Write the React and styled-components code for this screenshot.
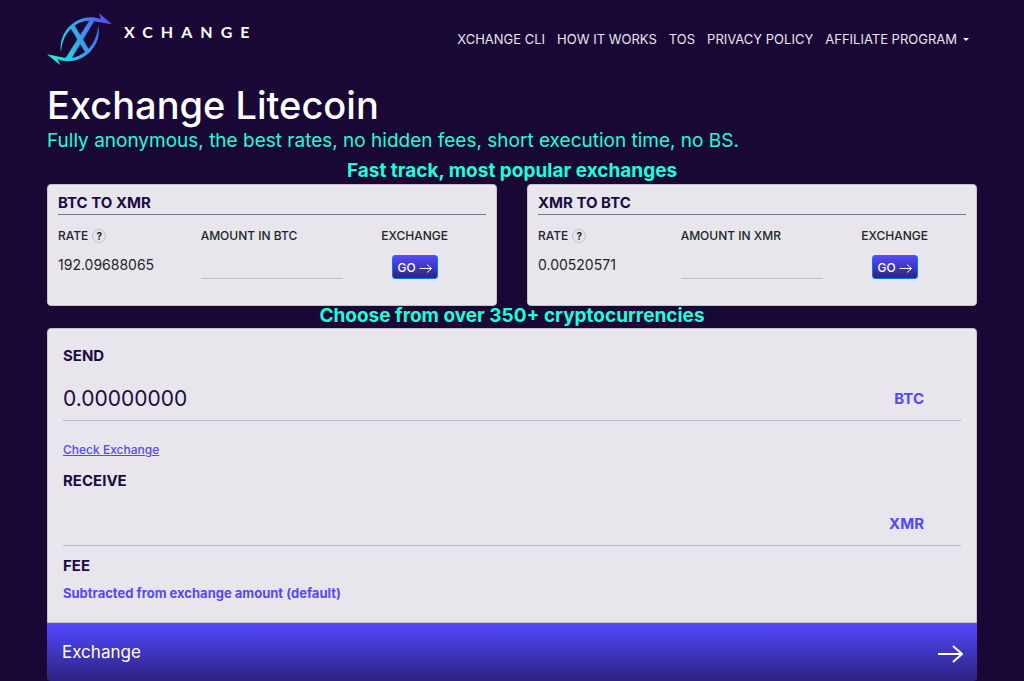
import React from 'react'
import styled, { createGlobalStyle } from 'styled-components'

const GlobalStyle = createGlobalStyle`
  * {
    box-sizing: border-box;
  }

  body {
    margin: 0;
    background: #190836;
    color: #212529;
    font-family: 'Inter', sans-serif;
    font-size: 12px;
    line-height: 20px;
  }

  button, input, select {
    font-family: inherit;
  }
`

const Container = styled.div`
  max-width: 960px;
  margin: 0 auto;
  padding: 0 15px;
`

const Header = styled.header`
  display: flex;
  align-items: flex-start;
  justify-content: space-between;
  height: 83px;
  padding: 12px 0;
`

const Brand = styled.a`
  display: flex;
  gap: 12px;
  color: #fff;
  text-decoration: none;
`

const BrandName = styled.span`
  margin-top: 10px;
  font-family: 'Lato', sans-serif;
  font-size: 16px;
  font-weight: 700;
  letter-spacing: 8px;
`

const Nav = styled.nav`
  display: flex;
  gap: 12px;
  padding: 17px 8px 0 0;
`

const NavLink = styled.a`
  display: flex;
  align-items: center;
  color: #e8e6ec;
  font-size: 13px;
  text-decoration: none;
`

const Caret = styled.span`
  margin-left: 6px;
  border-top: 3px solid #fff;
  border-right: 3px solid transparent;
  border-left: 3px solid transparent;
`

const Title = styled.h1`
  margin: 0;
  color: #fff;
  font-size: 38px;
  font-weight: 500;
  line-height: 44px;
`

const Subtitle = styled.p`
  margin: 0 0 6px;
  color: #1fffd7;
  font-size: 19px;
  line-height: 28px;
`

const SectionTitle = styled.h2`
  margin: 0;
  padding-bottom: 2px;
  color: #1fffd7;
  font-size: 19px;
  font-weight: 700;
  line-height: 20px;
  text-align: center;
`

const FastTrack = styled.div`
  display: grid;
  grid-template-columns: repeat(2, 1fr);
  gap: 30px;
  margin-top: 1px;

  @media only screen and (max-width: 768px) {
    grid-template-columns: 1fr;
  }
`

const Card = styled.form`
  padding: 8px 10px 26px;
  background: #e8e6ec;
  border: 1px solid #c6c3cb;
  border-radius: 4px;
`

const CardTitle = styled.h3`
  margin: 0 0 11px;
  padding-bottom: 2px;
  border-bottom: 1px solid #7d739b;
  color: #1c0a45;
  font-size: 15px;
  font-weight: 700;
  line-height: 19px;
`

const CardGrid = styled.div`
  display: grid;
  grid-template-columns: repeat(3, 1fr);
  row-gap: 2px;
`

const Label = styled.label`
  display: flex;
  align-items: center;
  justify-content: ${(props) => (props.$center ? 'center' : 'flex-start')};
  gap: 4px;
  font-weight: 500;
`

const Help = styled.button`
  width: 14px;
  height: 14px;
  padding: 0;
  background: none;
  border: 1px solid #c3bdd8;
  border-radius: 50%;
  color: #212529;
  font-size: 10px;
  font-weight: 700;
  line-height: 12px;
`

const Rate = styled.output`
  height: 31px;
  font-size: 14px;
  line-height: 34px;
`

const AmountInput = styled.input`
  width: 100%;
  height: 31px;
  padding: 0;
  background: none;
  border: 0;
  border-bottom: 1px solid #c0bbd8;
  border-radius: 0;
  font-size: 14px;
  outline: none;
`

const GoButton = styled.button`
  display: flex;
  align-items: center;
  place-self: end center;
  gap: 3px;
  height: 24px;
  padding: 0 5px;
  background: linear-gradient(#5448ff, #2c2380);
  border: 1px solid #007bff;
  border-radius: 3px;
  color: #fff;
  font-size: 12px;
  font-weight: 500;
`

const ExchangeForm = styled.form`
  display: flex;
  flex-direction: column;
`

const FormBody = styled.div`
  display: flex;
  flex-direction: column;
  align-items: flex-start;
  padding: 17px 15px 19px;
  background: #e8e6ec;
  border: 1px solid #c6c3cb;
  border-radius: 4px 4px 0 0;
`

const FieldLabel = styled.label`
  color: #1c0a45;
  font-size: 15px;
  font-weight: 700;
`

const CurrencyRow = styled.div`
  display: flex;
  width: 100%;
  height: 45px;
  margin: 10px 0;
  border-bottom: 1px solid #bdb8da;
`

const CurrencyInput = styled.input`
  flex: 1;
  min-width: 0;
  padding: 0;
  background: none;
  border: 0;
  color: #1c0a45;
  font-size: 21px;
  outline: none;
`

const Select = styled.select`
  padding: 0;
  appearance: none;
  background: none;
  border: 0;
  color: #5448ff;
  font-size: 13px;
  font-weight: 700;
  line-height: 20px;
`

const CurrencySelect = styled(Select)`
  padding: 2px 37px 0 60px;
  font-size: 15px;
  text-align-last: right;
`

const FeeSelect = styled(Select)`
  margin-top: 7px;
`

const CheckLink = styled.a`
  margin: 9px 0 11px;
  color: #5448ff;
  font-weight: 500;
`

const SubmitButton = styled.button`
  display: flex;
  align-items: center;
  justify-content: space-between;
  height: 58px;
  padding: 0 14px 0 15px;
  background: linear-gradient(#5448ff, #2c2380);
  border: 0;
  border-radius: 0 0 4px 4px;
  color: #fff;
  font-size: 17px;
`

const Logo = () => (
  <svg width="65" height="54" viewBox="22 20 195 162" aria-hidden="true">
    <defs>
      <linearGradient id="logo" gradientUnits="userSpaceOnUse" x1="30" y1="125" x2="205" y2="80">
        <stop offset="0" stopColor="#1fefd9" />
        <stop offset="0.5" stopColor="#38a6e8" />
        <stop offset="1" stopColor="#5450fa" />
      </linearGradient>
    </defs>
    <g fill="url(#logo)">
      <path d="M64 142C57 104 77 67 109 48C134 34 159 33 184 41L178 24L217 57L180 51C153 43 132 44 111 57C82 75 66 105 64 142Z" />
      <path d="M176 61C184 97 164 135 133 154C108 169 77 172 54 162L62 180L22 147L63 155C87 161 108 158 127 146C157 128 172 97 176 61Z" />
      <path d="M152 41L166 44L91 167L76 161Z" />
      <path d="M92 67L104 59L152 139L141 148Z" />
    </g>
  </svg>
)

const Arrow = ({ size, stroke }) => (
  <svg width={size} height={size} viewBox="0 0 26 26" fill="none" stroke="currentColor" strokeWidth={stroke} aria-hidden="true">
    <path d="M1 15H25M16 7L25 15L16 23" />
  </svg>
)

const links = ['XCHANGE CLI', 'HOW IT WORKS', 'TOS', 'PRIVACY POLICY']

const FastCard = ({ from, to, rate }) => (
  <Card>
    <CardTitle>{from} TO {to}</CardTitle>
    <CardGrid>
      <Label as="div">
        RATE <Help type="button" aria-label="About the rate">?</Help>
      </Label>
      <Label htmlFor={`amount-${from}`}>AMOUNT IN {from}</Label>
      <Label as="div" $center>EXCHANGE</Label>
      <Rate>{rate}</Rate>
      <AmountInput id={`amount-${from}`} type="text" />
      <GoButton type="button">
        GO <Arrow size={13} stroke={2} />
      </GoButton>
    </CardGrid>
  </Card>
)

const CurrencyField = ({ id, label, value, currency }) => (
  <>
    <FieldLabel htmlFor={id}>{label}</FieldLabel>
    <CurrencyRow>
      <CurrencyInput id={id} type="text" defaultValue={value} />
      <CurrencySelect aria-label={`${label} currency`} defaultValue={currency}>
        <option>BTC</option>
        <option>XMR</option>
      </CurrencySelect>
    </CurrencyRow>
  </>
)

const App = () => {
  return (
    <>
      <GlobalStyle />
      <Container>
        <Header>
          <Brand href="#">
            <Logo />
            <BrandName>XCHANGE</BrandName>
          </Brand>
          <Nav>
            {links.map((link) => (
              <NavLink href="#" key={link}>{link}</NavLink>
            ))}
            <NavLink href="#">AFFILIATE PROGRAM <Caret /></NavLink>
          </Nav>
        </Header>
        <main>
          <Title>Exchange Litecoin</Title>
          <Subtitle>
            Fully anonymous, the best rates, no hidden fees, short execution time, no BS.
          </Subtitle>
          <SectionTitle>Fast track, most popular exchanges</SectionTitle>
          <FastTrack>
            <FastCard from="BTC" to="XMR" rate="192.09688065" />
            <FastCard from="XMR" to="BTC" rate="0.00520571" />
          </FastTrack>
          <SectionTitle>Choose from over 350+ cryptocurrencies</SectionTitle>
          <ExchangeForm>
            <FormBody>
              <CurrencyField id="send" label="SEND" value="0.00000000" currency="BTC" />
              <CheckLink href="#">Check Exchange</CheckLink>
              <CurrencyField id="receive" label="RECEIVE" value="" currency="XMR" />
              <FieldLabel htmlFor="fee">FEE</FieldLabel>
              <FeeSelect id="fee">
                <option>Subtracted from exchange amount (default)</option>
              </FeeSelect>
            </FormBody>
            <SubmitButton type="button">
              Exchange <Arrow size={26} stroke={2} />
            </SubmitButton>
          </ExchangeForm>
        </main>
      </Container>
    </>
  )
}

export default App
